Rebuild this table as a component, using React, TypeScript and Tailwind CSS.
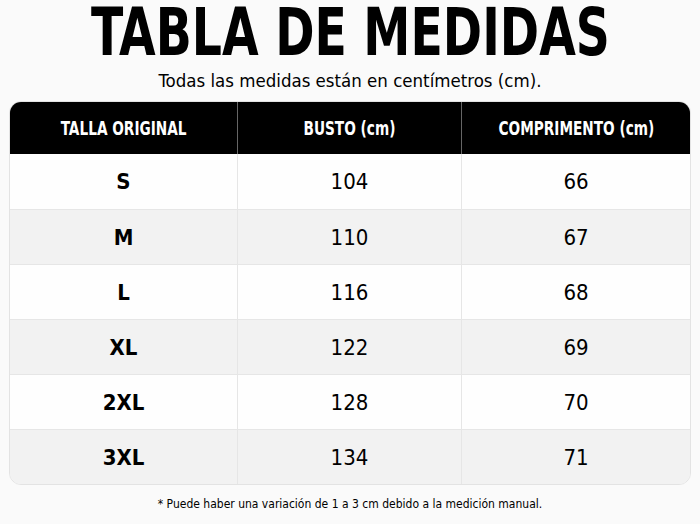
const rows = [
  { size: "S", busto: 104, largo: 66 },
  { size: "M", busto: 110, largo: 67 },
  { size: "L", busto: 116, largo: 68 },
  { size: "XL", busto: 122, largo: 69 },
  { size: "2XL", busto: 128, largo: 70 },
  { size: "3XL", busto: 134, largo: 71 },
];

const font = "font-['DejaVu_Sans',sans-serif] font-stretch-condensed";
const headers = ["TALLA ORIGINAL", "BUSTO (cm)", "COMPRIMENTO (cm)"];

export default function App() {
  return (
    <div className={`w-[700px] h-[524px] bg-[#fafafa] ${font} text-black flex flex-col items-center whitespace-nowrap`}>
      <h1 className="mt-[2px] text-[65px] leading-[62px] font-bold scale-x-[0.81]">TABLA DE MEDIDAS</h1>
      <p className="mt-[5px] text-[18.5px] leading-[24px]">Todas las medidas están en centímetros (cm).</p>

      <div className="mt-[8px] w-[682px] rounded-[12px] border border-[#e3e3e3] overflow-hidden">
        <div className="grid grid-cols-[228px_224px_1fr] h-[52px] bg-black text-white text-[19px] font-bold">
          {headers.map((h, i) => (
            <div key={h} className={`flex items-center justify-center ${i < 2 ? "border-r border-[#666]" : ""}`}>
              <span className="inline-block scale-x-[0.8]">{h}</span>
            </div>
          ))}
        </div>
        {rows.map((r, i) => (
          <div
            key={r.size}
            className={`grid grid-cols-[228px_224px_1fr] h-[55px] text-[22px] ${i % 2 === 0 ? "bg-[#fefefe]" : "bg-[#f2f2f2]"} ${i > 0 ? "border-t border-[#e6e6e6]" : ""}`}
          >
            <div className="flex items-center justify-center border-r border-[#e6e6e6] font-bold">{r.size}</div>
            <div className="flex items-center justify-center border-r border-[#e6e6e6]">{r.busto}</div>
            <div className="flex items-center justify-center">{r.largo}</div>
          </div>
        ))}
      </div>

      <p className="mt-[11px] text-[12px] leading-[16px]">* Puede haber una variación de 1 a 3 cm debido a la medición manual.</p>
    </div>
  );
}
